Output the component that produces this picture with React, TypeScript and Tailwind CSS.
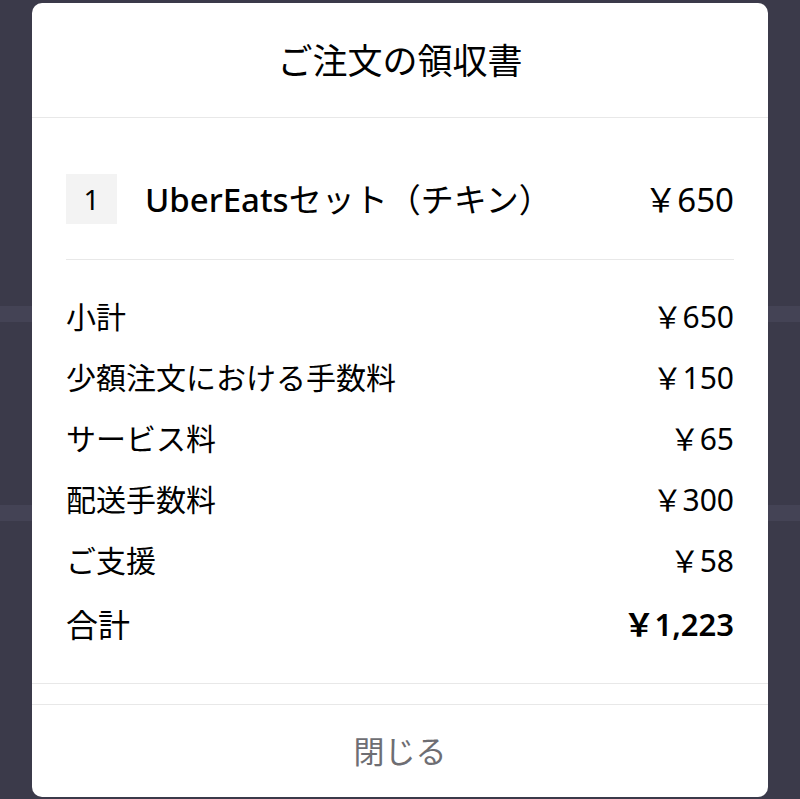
import React from "react"

type Line = { label: string; amount: string }

const lines: Line[] = [
  { label: "小計", amount: "￥650" },
  { label: "少額注文における手数料", amount: "￥150" },
  { label: "サービス料", amount: "￥65" },
  { label: "配送手数料", amount: "￥300" },
  { label: "ご支援", amount: "￥58" },
]

const font = { fontFamily: '"Noto Sans", "Noto Sans CJK JP", sans-serif' }

export default function App() {
  return (
    <div className="relative h-[799px] w-full overflow-hidden bg-[#3b3a4a]" style={font}>
      {/* page content dimmed behind the modal */}
      <div className="flex flex-col">
        <div className="h-[306px]" />
        <div className="h-[16px] bg-[#444355]" />
        <div className="h-[183px]" />
        <div className="h-[16px] bg-[#444355]" />
      </div>

      <div className="absolute left-[32px] right-[32px] top-[3px] bottom-[2px] flex flex-col rounded-[10px] bg-white text-black">
        <div className="flex h-[115px] items-center justify-center border-b border-[#e8e8e8]">
          <h1 className="text-[35px] font-normal leading-none">ご注文の領収書</h1>
        </div>

        <div className="px-[34px]">
          <div className="flex items-center border-b border-[#e8e8e8] pt-[56px] pb-[35px]">
            <div className="flex h-[50px] w-[51px] items-center justify-center bg-[#f3f3f3] text-[28px] leading-none">
              1
            </div>
            <div className="ml-[28px] flex-1 text-[33px] font-medium leading-none">
              UberEats<span className="font-normal">セット（チキン）</span>
            </div>
            <div className="text-[33px] leading-none">￥650</div>
          </div>

          <div className="flex flex-col pt-[26px] pb-[25px]">
            {lines.map((l) => (
              <div key={l.label} className="flex h-[61px] items-center justify-between text-[30px] leading-none">
                <span>{l.label}</span>
                <span>{l.amount}</span>
              </div>
            ))}
            <div className="flex h-[67px] items-center justify-between text-[31px] leading-none">
              <span className="text-[32px]">合計</span>
              <span className="font-semibold">￥1,223</span>
            </div>
          </div>
        </div>

        <div className="h-[22px] border-y border-[#e8e8e8]" />
        <button className="flex flex-1 items-center justify-center text-[31px] text-[#6e6e73]">閉じる</button>
      </div>
    </div>
  )
}
